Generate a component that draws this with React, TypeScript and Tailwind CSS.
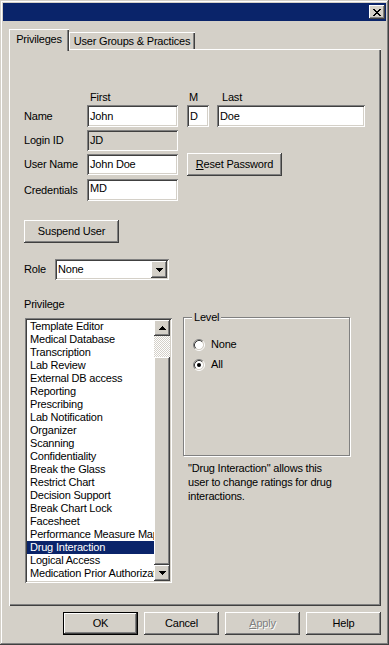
import React from "react";

const RAISED =
  "shadow-[inset_-1px_-1px_0_#404040,inset_1px_1px_0_#ffffff,inset_-2px_-2px_0_#808080,inset_2px_2px_0_#d4d0c8]";
const SUNKEN =
  "shadow-[inset_1px_1px_0_#808080,inset_-1px_-1px_0_#ffffff,inset_2px_2px_0_#404040,inset_-2px_-2px_0_#d4d0c8]";

function Btn({ children, className = "" }: { children?: React.ReactNode; className?: string }) {
  return (
    <div className={`${RAISED} bg-[#d4d0c8] flex items-center justify-center shrink-0 ${className}`}>
      {children}
    </div>
  );
}

function Field({ value, className = "" }: { value: string; className?: string }) {
  return (
    <div className={`${SUNKEN} flex items-center pl-[3px] shrink-0 ${className}`}>
      {value}
    </div>
  );
}

function ArrowUp() {
  return (
    <svg width="7" height="4" viewBox="0 0 7 4" shapeRendering="crispEdges">
      <rect x="3" y="0" width="1" height="1" fill="#000" />
      <rect x="2" y="1" width="3" height="1" fill="#000" />
      <rect x="1" y="2" width="5" height="1" fill="#000" />
      <rect x="0" y="3" width="7" height="1" fill="#000" />
    </svg>
  );
}

function ArrowDown() {
  return (
    <svg width="7" height="4" viewBox="0 0 7 4" shapeRendering="crispEdges">
      <rect x="0" y="0" width="7" height="1" fill="#000" />
      <rect x="1" y="1" width="5" height="1" fill="#000" />
      <rect x="2" y="2" width="3" height="1" fill="#000" />
      <rect x="3" y="3" width="1" height="1" fill="#000" />
    </svg>
  );
}

function CloseGlyph() {
  const rows = [
    [0, 1, 6, 7],
    [1, 2, 5, 6],
    [2, 3, 4, 5],
    [3, 4],
    [2, 3, 4, 5],
    [1, 2, 5, 6],
    [0, 1, 6, 7],
  ];
  return (
    <svg width="8" height="7" viewBox="0 0 8 7" shapeRendering="crispEdges">
      {rows.map((cols, y) =>
        cols.map((x) => <rect key={`${x}-${y}`} x={x} y={y} width="1" height="1" fill="#000" />)
      )}
    </svg>
  );
}

function Radio({ checked }: { checked?: boolean }) {
  return (
    <svg width="12" height="12" viewBox="0 0 12 12" className="shrink-0">
      <circle cx="6" cy="6" r="4.2" fill="#fff" />
      <path d="M2.11 9.89 A5.5 5.5 0 0 1 9.89 2.11" stroke="#808080" strokeWidth="1" fill="none" />
      <path d="M9.89 2.11 A5.5 5.5 0 0 1 2.11 9.89" stroke="#ffffff" strokeWidth="1" fill="none" />
      <path d="M2.82 9.18 A4.5 4.5 0 0 1 9.18 2.82" stroke="#404040" strokeWidth="1" fill="none" />
      <path d="M9.18 2.82 A4.5 4.5 0 0 1 2.82 9.18" stroke="#d4d0c8" strokeWidth="1" fill="none" />
      {checked && <circle cx="6" cy="6" r="2" fill="#000" />}
    </svg>
  );
}

const ITEMS = [
  "Template Editor",
  "Medical Database",
  "Transcription",
  "Lab Review",
  "External DB access",
  "Reporting",
  "Prescribing",
  "Lab Notification",
  "Organizer",
  "Scanning",
  "Confidentiality",
  "Break the Glass",
  "Restrict Chart",
  "Decision Support",
  "Break Chart Lock",
  "Facesheet",
  "Performance Measure Map",
  "Drug Interaction",
  "Logical Access",
  "Medication Prior Authorization",
];

export default function App() {
  return (
    <div className="w-[389px] h-[645px] bg-[#d4d0c8] p-[3px] flex flex-col font-['Liberation_Sans',Arial,sans-serif] text-[11px] tracking-[-0.2px] leading-none text-black select-none shadow-[inset_-1px_-1px_0_#404040,inset_1px_1px_0_#d4d0c8,inset_-2px_-2px_0_#808080,inset_2px_2px_0_#ffffff]">
      {/* Title bar */}
      <div className="h-[18px] bg-[#0a246a] flex items-start justify-end pt-[2px] pr-[1px] shrink-0">
        <Btn className="w-[16px] h-[14px]">
          <CloseGlyph />
        </Btn>
      </div>

      {/* Tabs */}
      <div className="pl-[6px] pt-[8px] flex flex-col">
        <div className="flex items-end h-[20px]">
          <div className="relative z-10 w-[60px] h-[22px] -mb-[2px] bg-[#d4d0c8] flex items-center justify-center pb-[2px] shadow-[inset_1px_1px_0_#ffffff,inset_-1px_0_0_#404040,inset_-2px_0_0_#808080]">
            Privileges
          </div>
          <div className="w-[126px] h-[17px] bg-[#d4d0c8] flex items-center justify-center pt-[1px] shadow-[inset_1px_1px_0_#ffffff,inset_-1px_0_0_#404040,inset_-2px_0_0_#808080]">
            User Groups &amp; Practices
          </div>
        </div>

        {/* Panel */}
        <div className="w-[372px] h-[557px] flex flex-col pl-[15px] pt-[42px] shadow-[inset_1px_1px_0_#ffffff,inset_-1px_-1px_0_#404040,inset_-2px_-2px_0_#808080]">
          {/* header labels */}
          <div className="flex items-center h-[13px]">
            <div className="w-[164px] pl-[66px]">First</div>
            <div className="w-[34px] pl-[1px]">M</div>
            <div>Last</div>
          </div>
          {/* Name */}
          <div className="flex items-center h-[22px] mt-[1px]">
            <div className="w-[63px]">Name</div>
            <Field value="John" className="w-[91px] h-[22px] bg-white" />
            <Field value="D" className="w-[22px] h-[22px] bg-white ml-[9px]" />
            <Field value="Doe" className="w-[148px] h-[22px] bg-white ml-[8px]" />
          </div>
          {/* Login ID */}
          <div className="flex items-center h-[21px] mt-[3px]">
            <div className="w-[63px]">Login ID</div>
            <Field value="JD" className="w-[91px] h-[21px] bg-[#d4d0c8]" />
          </div>
          {/* User Name */}
          <div className="flex items-center h-[21px] mt-[3px]">
            <div className="w-[63px]">User Name</div>
            <Field value="John Doe" className="w-[91px] h-[21px] bg-white" />
            <Btn className="w-[95px] h-[23px] ml-[9px]">
              <span>
                <span className="underline">R</span>eset Password
              </span>
            </Btn>
          </div>
          {/* Credentials */}
          <div className="flex items-center h-[22px] mt-[4px]">
            <div className="w-[63px]">Credentials</div>
            <Field value="MD" className="w-[91px] h-[22px] bg-white items-start pt-[4px]" />
          </div>
          {/* Suspend */}
          <div className="flex mt-[19px]">
            <Btn className="w-[95px] h-[23px]">Suspend User</Btn>
          </div>
          {/* Role */}
          <div className="flex items-center h-[21px] mt-[16px]">
            <div className="w-[31px]">Role</div>
            <div className={`${SUNKEN} bg-white w-[114px] h-[21px] flex items-center p-[2px]`}>
              <div className="flex-1 pl-[1px]">None</div>
              <Btn className="w-[16px] h-[17px]">
                <ArrowDown />
              </Btn>
            </div>
          </div>
          {/* Privilege */}
          <div className="flex items-center h-[13px] mt-[18px]">Privilege</div>
          {/* List + level */}
          <div className="flex items-start mt-[7px]">
            <div className={`${SUNKEN} bg-white w-[147px] h-[265px] ml-[1px] p-[2px] flex shrink-0`}>
              <div className="w-[127px] flex flex-col overflow-hidden">
                {ITEMS.map((it) => (
                  <div
                    key={it}
                    className={`h-[13px] pl-[3px] flex items-center whitespace-nowrap shrink-0 ${
                      it === "Drug Interaction" ? "bg-[#0a246a] text-white" : ""
                    }`}
                  >
                    {it}
                  </div>
                ))}
              </div>
              <div className="w-[16px] flex flex-col">
                <Btn className="w-[16px] h-[16px]">
                  <ArrowUp />
                </Btn>
                <div className="h-[21px] [background-image:repeating-conic-gradient(#ffffff_0%_25%,#d4d0c8_0%_50%)] [background-size:2px_2px]" />
                <Btn className="w-[16px] h-[208px]" />
                <Btn className="w-[16px] h-[16px]">
                  <ArrowDown />
                </Btn>
              </div>
            </div>
            <div className="flex flex-col ml-[11px] -mt-[1px]">
              <div className="relative w-[167px] h-[139px] border border-[#808080] shadow-[1px_1px_0_#ffffff,inset_1px_1px_0_#ffffff] pl-[9px] pt-[20px] flex flex-col">
                <div className="absolute -top-[6px] left-[8px] px-[2px] bg-[#d4d0c8] leading-[11px]">Level</div>
                <div className="flex items-center h-[13px]">
                  <Radio />
                  <span className="ml-[6px]">None</span>
                </div>
                <div className="flex items-center h-[13px] mt-[7px]">
                  <Radio checked />
                  <span className="ml-[6px]">All</span>
                </div>
              </div>
              <div className="ml-[5px] mt-[5px] leading-[14px]">
                &quot;Drug Interaction&quot; allows this
                <br />
                user to change ratings for drug
                <br />
                interactions.
              </div>
            </div>
          </div>
        </div>
      </div>

      {/* Bottom buttons */}
      <div className="flex justify-end gap-[6px] pr-[5px] mt-[6px]">
        <div className="w-[75px] h-[23px] border border-black flex">
          <Btn className="flex-1 h-full">OK</Btn>
        </div>
        <Btn className="w-[75px] h-[23px]">Cancel</Btn>
        <Btn className="w-[75px] h-[23px] text-[#808080] [text-shadow:1px_1px_0_#ffffff]">
          <span>
            <span className="underline">A</span>pply
          </span>
        </Btn>
        <Btn className="w-[75px] h-[23px]">Help</Btn>
      </div>
    </div>
  );
}
